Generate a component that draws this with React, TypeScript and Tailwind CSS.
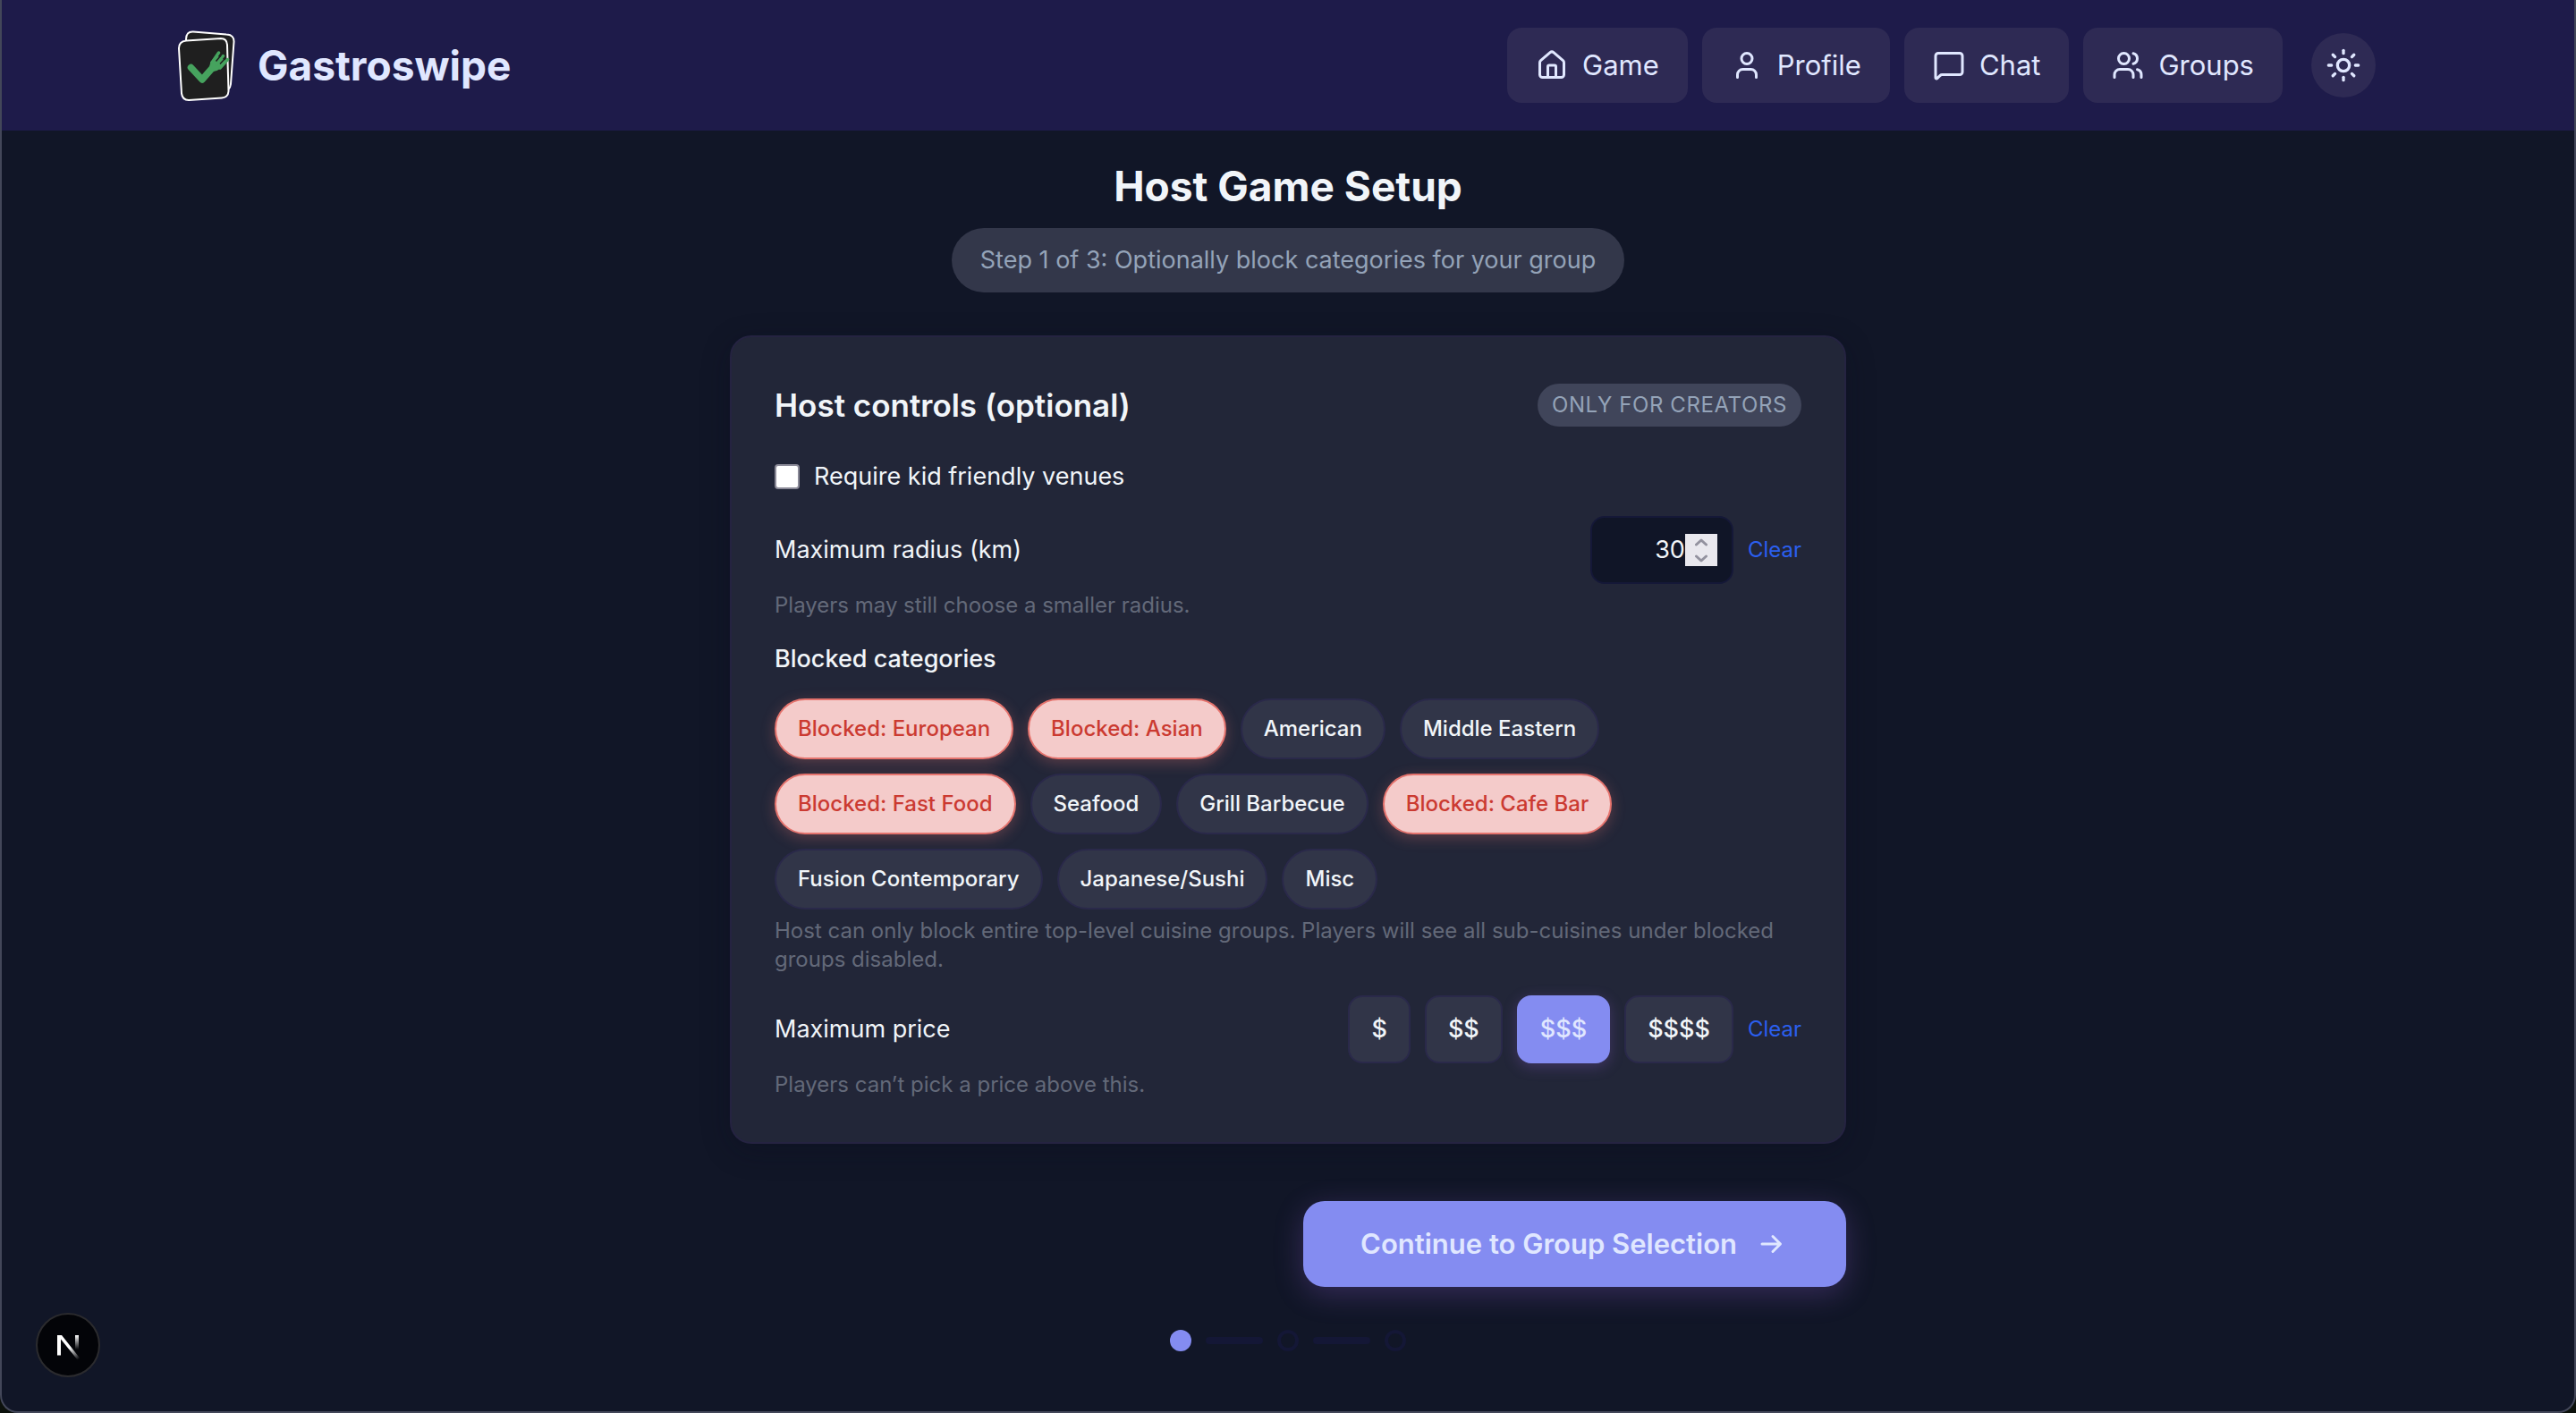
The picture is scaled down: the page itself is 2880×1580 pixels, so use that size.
import { useState } from "react";
import type { ReactNode } from "react";
import { House, MessageSquare, Sun, User, Users } from "lucide-react";

const CATEGORIES = [
  "European",
  "Asian",
  "American",
  "Middle Eastern",
  "Fast Food",
  "Seafood",
  "Grill Barbecue",
  "Cafe Bar",
  "Fusion Contemporary",
  "Japanese/Sushi",
  "Misc",
];

const PRICES = ["$", "$$", "$$$", "$$$$"];

function Logo() {
  return (
    <svg viewBox="0 0 72 84" className="h-[84px] w-[72px]" aria-hidden="true">
      <path
        d="M20 4.5 L57 7.5 Q66 8 65.500 16 L62 63 Q61 71 54 70 L18 66 Q12 65 12 58 L12 13 Q12 4 20 4.500Z"
        fill="#1f1f1f"
        stroke="#fff"
        strokeWidth="2"
      />
      <path
        d="M12 14.500 L51 12 Q57.500 12 58 19 L59.500 71 Q59 78 52 78.500 L15 81 Q8 81 7 73.500 L4 23 Q4 15.500 12 14.500Z"
        fill="#1f1f1f"
        stroke="#fff"
        strokeWidth="2"
      />
      <path d="M17.500 44.500 L30 58 L44 42" fill="none" stroke="#46a35e" strokeWidth="7.500" strokeLinecap="round" strokeLinejoin="round" />
      <path d="M39.500 38 Q37 46 39 49 Q45 50 50 46 L57.500 37.500 L46 31Z" fill="#46a35e" />
      <path
        d="M41 39 L48.500 28 M46 41 L53.500 31.500 M50 45 L58.500 35.500"
        fill="none"
        stroke="#46a35e"
        strokeWidth="3.500"
        strokeLinecap="round"
      />
      <path d="M45.500 37.500 L51 31 M50 40.500 L55.500 34.500" fill="none" stroke="#1f1f1f" strokeWidth="1.500" />
    </svg>
  );
}

function NavLink({ icon, children }: { icon: ReactNode; children: ReactNode }) {
  return (
    <a href="#" className="flex items-center gap-4 rounded-2xl bg-[#2e2a54] px-8 py-5 text-[31px] leading-[44px]">
      {icon}
      {children}
    </a>
  );
}

function Header() {
  return (
    <header className="flex items-center justify-between bg-[#1e1b4a] py-[31px] pr-[222px] pl-[194px] text-[#e0e7ff]">
      <a href="#" className="-my-1 flex items-center gap-5 text-[46px] leading-[56px] font-bold">
        <Logo />
        Gastroswipe
      </a>
      <div className="flex items-center gap-8">
        <nav className="flex items-center gap-4">
          <NavLink icon={<House size={36} />}>Game</NavLink>
          <NavLink icon={<User size={36} />}>Profile</NavLink>
          <NavLink icon={<MessageSquare size={36} />}>Chat</NavLink>
          <NavLink icon={<Users size={36} />}>Groups</NavLink>
        </nav>
        <button type="button" aria-label="Toggle theme" className="flex size-[72px] items-center justify-center rounded-full bg-[#2e2a54]">
          <Sun size={40} />
        </button>
      </div>
    </header>
  );
}

function Help({ children }: { children: ReactNode }) {
  return <p className="mt-2 text-[24px] leading-8 text-[#636979]">{children}</p>;
}

function ClearButton({ onClick }: { onClick: () => void }) {
  return (
    <button type="button" onClick={onClick} className="text-[24px] leading-8 text-[#2b5fef]">
      Clear
    </button>
  );
}

function HostControls() {
  const [kids, setKids] = useState(false);
  const [radius, setRadius] = useState("30");
  const [blocked, setBlocked] = useState(["European", "Asian", "Fast Food", "Cafe Bar"]);
  const [price, setPrice] = useState("$$$");

  const step = (by: number) => setRadius(String(Math.max(1, Number(radius || 0) + by)));
  const toggle = (name: string) =>
    setBlocked(blocked.includes(name) ? blocked.filter((b) => b !== name) : [...blocked, name]);

  return (
    <section className="mt-12 w-full rounded-3xl border-2 border-[#252341] bg-[#222638] p-12 text-[27px] leading-10 text-[#f1f5f9] shadow-[0_8px_32px_rgba(10,12,30,0.3)]">
      <div className="flex items-center justify-between">
        <h2 className="text-[35px] leading-[56px] font-semibold">Host controls (optional)</h2>
        <span className="rounded-full bg-[#40455a] px-4 py-2 text-[24px] leading-8 tracking-wide text-[#94a3b8] uppercase">
          Only for creators
        </span>
      </div>

      <label className="mt-8 flex w-fit items-center gap-4">
        <input
          type="checkbox"
          checked={kids}
          onChange={(e) => setKids(e.target.checked)}
          className="size-7 appearance-none rounded border-2 border-[#8b8a98] bg-white checked:bg-[#848cf1]"
        />
        Require kid friendly venues
      </label>

      <div className="mt-6 flex items-center justify-between">
        <label htmlFor="radius">Maximum radius (km)</label>
        <div className="flex items-center gap-4">
          <div className="flex h-[76px] w-40 items-center rounded-2xl border-2 border-[#151838] bg-[#101527] pr-4 pl-6">
            <input
              id="radius"
              type="number"
              value={radius}
              onChange={(e) => setRadius(e.target.value)}
              className="w-full min-w-0 flex-1 [appearance:textfield] bg-transparent text-right outline-none [&::-webkit-inner-spin-button]:appearance-none"
            />
            <div className="flex h-9 w-9 shrink-0 flex-col bg-[#e9e8ee] text-[#93929f]">
              <button type="button" aria-label="Increase radius" onClick={() => step(1)} className="flex flex-1 items-center justify-center">
                <svg viewBox="0 0 14 9" className="h-[9px] w-3.5" fill="none" stroke="currentColor" strokeWidth="3" strokeLinecap="round" strokeLinejoin="round">
                  <path d="M1.500 7 L7 2 L12.500 7" />
                </svg>
              </button>
              <button type="button" aria-label="Decrease radius" onClick={() => step(-1)} className="flex flex-1 items-center justify-center">
                <svg viewBox="0 0 14 9" className="h-[9px] w-3.5" fill="none" stroke="currentColor" strokeWidth="3" strokeLinecap="round" strokeLinejoin="round">
                  <path d="M1.500 2 L7 7 L12.500 2" />
                </svg>
              </button>
            </div>
          </div>
          <ClearButton onClick={() => setRadius("")} />
        </div>
      </div>
      <Help>Players may still choose a smaller radius.</Help>

      <h3 className="mt-6 font-medium">Blocked categories</h3>
      <div className="mt-6 flex flex-wrap gap-4">
        {CATEGORIES.map((name) => {
          const on = blocked.includes(name);
          return (
            <button
              key={name}
              type="button"
              aria-pressed={on}
              onClick={() => toggle(name)}
              className={
                on
                  ? "rounded-full border-2 border-[#e5736d] bg-[#f4cbca] px-6 py-4 text-[24px] leading-8 font-medium text-[#cb3a31] shadow-[0_4px_16px_rgba(229,115,109,0.3)]"
                  : "rounded-full border-2 border-[#2a294a] bg-[#313548] px-6 py-4 text-[24px] leading-8 font-medium"
              }
            >
              {on ? `Blocked: ${name}` : name}
            </button>
          );
        })}
      </div>
      <Help>
        Host can only block entire top-level cuisine groups. Players will see all sub-cuisines under blocked groups disabled.
      </Help>

      <div className="mt-6 flex items-center justify-between">
        <span id="price-label">Maximum price</span>
        <div role="group" aria-labelledby="price-label" className="flex items-center gap-4">
          {PRICES.map((p) => (
            <button
              key={p}
              type="button"
              aria-pressed={p === price}
              onClick={() => setPrice(p)}
              className={
                p === price
                  ? "rounded-2xl border-2 border-[#848cf1] bg-[#848cf1] px-6 py-4 font-medium text-[#e0e7ff] shadow-[0_4px_16px_rgba(139,92,206,0.3)]"
                  : "rounded-2xl border-2 border-[#2a294a] bg-[#313548] px-6 py-4 font-medium"
              }
            >
              {p}
            </button>
          ))}
          <ClearButton onClick={() => setPrice("")} />
        </div>
      </div>
      <Help>Players can’t pick a price above this.</Help>
    </section>
  );
}

function Steps() {
  return (
    <div className="mt-12 flex items-center gap-4" aria-label="Step 1 of 3">
      <span className="size-6 rounded-full bg-[#848cf1]" />
      <span className="h-2 w-16 rounded-full bg-[#141736]" />
      <span className="size-6 rounded-full border-4 border-[#141736]" />
      <span className="h-2 w-16 rounded-full bg-[#141736]" />
      <span className="size-6 rounded-full border-4 border-[#141736]" />
    </div>
  );
}

function DevBadge() {
  return (
    <button
      type="button"
      aria-label="Open developer tools"
      className="fixed bottom-10 left-10 flex size-[72px] items-center justify-center rounded-full border-2 border-[#2b2b2e] bg-[#030408]"
    >
      <svg viewBox="0 0 28 30" className="mt-1 h-[30px] w-7" fill="none" aria-hidden="true">
        <defs>
          <linearGradient id="diagonal" x1="16" y1="16" x2="26" y2="29" gradientUnits="userSpaceOnUse">
            <stop stopColor="#fff" />
            <stop offset="1" stopColor="#fff" stopOpacity="0" />
          </linearGradient>
          <linearGradient id="stem" x1="24" y1="2" x2="24" y2="18" gradientUnits="userSpaceOnUse">
            <stop stopColor="#fff" />
            <stop offset="1" stopColor="#fff" stopOpacity="0" />
          </linearGradient>
        </defs>
        <path d="M2 2H7L27.500 28L25 30L6 6.500V24.500H2Z" fill="url(#diagonal)" />
        <path d="M22 2H26V18H22Z" fill="url(#stem)" />
      </svg>
    </button>
  );
}

export default function App() {
  return (
    <div className="min-h-screen bg-[#0c110c] font-['Inter',sans-serif]">
      <div className="flex min-h-screen flex-col overflow-hidden rounded-b-[20px] border-x-2 border-b-2 border-[#434759] bg-[#111627]">
        <Header />
        <main className="mx-auto flex w-full max-w-[1248px] flex-col items-center pt-[31px] pb-12">
          <h1 className="text-[46px] leading-[62px] font-bold text-[#f1f5f9]">Host Game Setup</h1>
          <p className="mt-4 rounded-full bg-[#33374a] px-8 py-4 text-[27px] leading-10 text-[#94a3b8]">
            Step 1 of 3: Optionally block categories for your group
          </p>
          <HostControls />
          <button
            type="button"
            className="mt-16 flex items-center gap-6 self-end rounded-3xl bg-[#848cf1] py-6 pr-[70px] pl-16 text-[31px] leading-[48px] font-semibold text-[#e0e7ff] shadow-[0_8px_32px_rgba(139,92,206,0.3)]"
          >
            Continue to Group Selection
            <svg viewBox="0 0 28 28" className="size-7" fill="none" stroke="currentColor" strokeWidth="3" strokeLinecap="round" strokeLinejoin="round" aria-hidden="true">
              <path d="M4 14H24M16 5.500L24.500 14L16 22.500" />
            </svg>
          </button>
          <Steps />
        </main>
      </div>
      <DevBadge />
    </div>
  );
}
